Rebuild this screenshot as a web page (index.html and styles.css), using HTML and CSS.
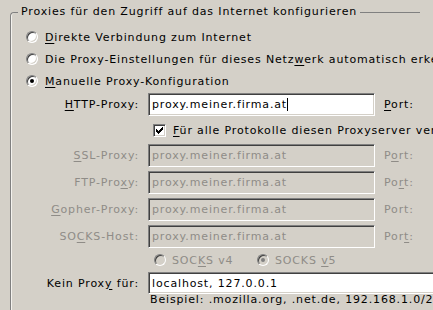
FILE: index.html
```html
<!DOCTYPE html>
<html lang="de">
<head>
<meta charset="utf-8">
<link rel="stylesheet" href="styles.css">
</head>
<body>
<fieldset class="group">
  <legend class="group-title">Proxies für den Zugriff auf das Internet konfigurieren</legend>
  <div class="choices">
    <div class="choice"><span class="radio"></span><span><u>D</u>irekte Verbindung zum Internet</span></div>
    <div class="choice"><span class="radio"></span><span>Die Proxy-Einstellungen für dieses Netz<u>w</u>erk automatisch erkennen</span></div>
    <div class="choice"><span class="radio checked"></span><span><u>M</u>anuelle Proxy-Konfiguration</span></div>
  </div>
  <div class="proxy-grid">
    <span class="lbl"><u>H</u>TTP-Proxy:</span>
    <span class="field">proxy.meiner.firma.at<span class="caret"></span></span>
    <span class="port"><u>P</u>ort:</span>

    <span class="check-row">
      <span class="checkbox"><svg width="9" height="9" viewBox="0 0 9 9"><path d="M1 3h1v3h-1z M2 4h1v3h-1z M3 5h1v3h-1z M4 4h1v3h-1z M5 3h1v3h-1z M6 2h1v3h-1z M7 1h1v3h-1z" fill="#000"/></svg></span>
      <span><u>F</u>ür alle Protokolle diesen Proxyserver verwenden</span>
    </span>

    <span class="lbl disabled"><u>S</u>SL-Proxy:</span>
    <span class="field off">proxy.meiner.firma.at</span>
    <span class="port disabled">P<u>o</u>rt:</span>

    <span class="lbl disabled">FTP-Pro<u>x</u>y:</span>
    <span class="field off">proxy.meiner.firma.at</span>
    <span class="port disabled">Po<u>r</u>t:</span>

    <span class="lbl disabled"><u>G</u>opher-Proxy:</span>
    <span class="field off">proxy.meiner.firma.at</span>
    <span class="port disabled">Port:</span>

    <span class="lbl disabled">SO<u>C</u>KS-Host:</span>
    <span class="field off">proxy.meiner.firma.at</span>
    <span class="port disabled">Por<u>t</u>:</span>

    <span class="socks-row disabled">
      <span class="opt first"><span class="radio off"></span><span>SOC<u>K</u>S v4</span></span>
      <span class="opt"><span class="radio off checked"></span><span>SOCKS <u>v</u>5</span></span>
    </span>

    <span class="lbl">Kein Prox<u>y</u> für:</span>
    <span class="field wide">localhost, 127.0.0.1</span>

    <span class="hint">Beispiel: .mozilla.org, .net.de, 192.168.1.0/24</span>
  </div>
</fieldset>
</body>
</html>
```

FILE: styles.css
```css
html, body {
  margin: 0;
  padding: 0;
}
body {
  width: 433px;
  height: 310px;
  overflow: hidden;
  background: #d4d0c8;
  font-family: "DejaVu Sans", Verdana, sans-serif;
  font-size: 11px;
  letter-spacing: 0.85px;
  color: #000;
  white-space: nowrap;
}
u {
  text-decoration: underline;
  text-underline-offset: 2px;
}
.group {
  margin: 5px 0 0 10px;
  padding: 0;
  width: 410px;
  height: 305px;
  min-width: 0;
  box-sizing: border-box;
  border: 1px solid #808080;
  border-right: none;
  border-bottom: none;
  border-top-left-radius: 4px;
  box-shadow: inset 1px 0 #f4f2ee;
}
.group-title {
  margin-left: 7px;
  padding: 0 3px;
  line-height: 14px;
}
.choices {
  padding-top: 7px;
  padding-left: 15px;
}
.choice {
  height: 22px;
  display: flex;
  align-items: center;
  gap: 7px;
}
.radio {
  position: relative;
  flex: none;
  width: 12px;
  height: 12px;
  box-sizing: border-box;
  border-radius: 50%;
  background: #fff;
  border: 1px solid;
  border-color: #808080 #fff #fff #808080;
  box-shadow: inset 1px 1px #404040, inset -1px -1px #d4d0c8;
}
.radio.off {
  background: #d4d0c8;
}
.radio.checked::after {
  content: "";
  position: absolute;
  left: 3px;
  top: 3px;
  width: 4px;
  height: 4px;
  border-radius: 50%;
  background: #000;
}
.radio.off.checked::after {
  background: #808080;
}
.proxy-grid {
  margin-top: 1px;
  display: grid;
  grid-template-columns: 127px 227px auto;
  grid-template-rows: 23px 20px 23px 23px 23px 23px 16px 22px 10px;
  column-gap: 10px;
  row-gap: 4px;
  align-items: center;
}
.lbl {
  text-align: right;
  margin-right: -1px;
}
.disabled {
  color: #8f8c87;
}
.field {
  height: 23px;
  box-sizing: border-box;
  border: 1px solid;
  border-color: #808080 #fff #fff #808080;
  box-shadow: inset 1px 1px #404040, inset -1px -1px #d4d0c8;
  background: #fff;
  padding: 0 3px;
  display: flex;
  align-items: center;
  overflow: hidden;
}
.field.off {
  background: #d4d0c8;
  color: #8f8c87;
}
.field.wide {
  grid-column: 2 / span 2;
  width: 290px;
  height: 22px;
}
.caret {
  display: inline-block;
  width: 1px;
  height: 13px;
  background: #000;
}
.port {
  margin-left: -1px;
}
.check-row {
  grid-column: 2 / span 2;
  display: flex;
  align-items: center;
  gap: 7px;
  padding-left: 5px;
}
.checkbox {
  flex: none;
  width: 13px;
  height: 13px;
  box-sizing: border-box;
  border: 1px solid;
  border-color: #808080 #fff #fff #808080;
  box-shadow: inset 1px 1px #404040, inset -1px -1px #d4d0c8;
  background: #fff;
  padding: 1px;
  display: flex;
}
.checkbox svg {
  display: block;
}
.socks-row {
  grid-column: 2 / span 2;
  display: flex;
  align-items: center;
  padding-left: 6px;
}
.opt {
  display: flex;
  align-items: center;
  gap: 6px;
}
.opt.first {
  width: 103px;
}
.hint {
  grid-column: 2 / span 2;
  padding-left: 2px;
  margin-top: -7px;
}
```
